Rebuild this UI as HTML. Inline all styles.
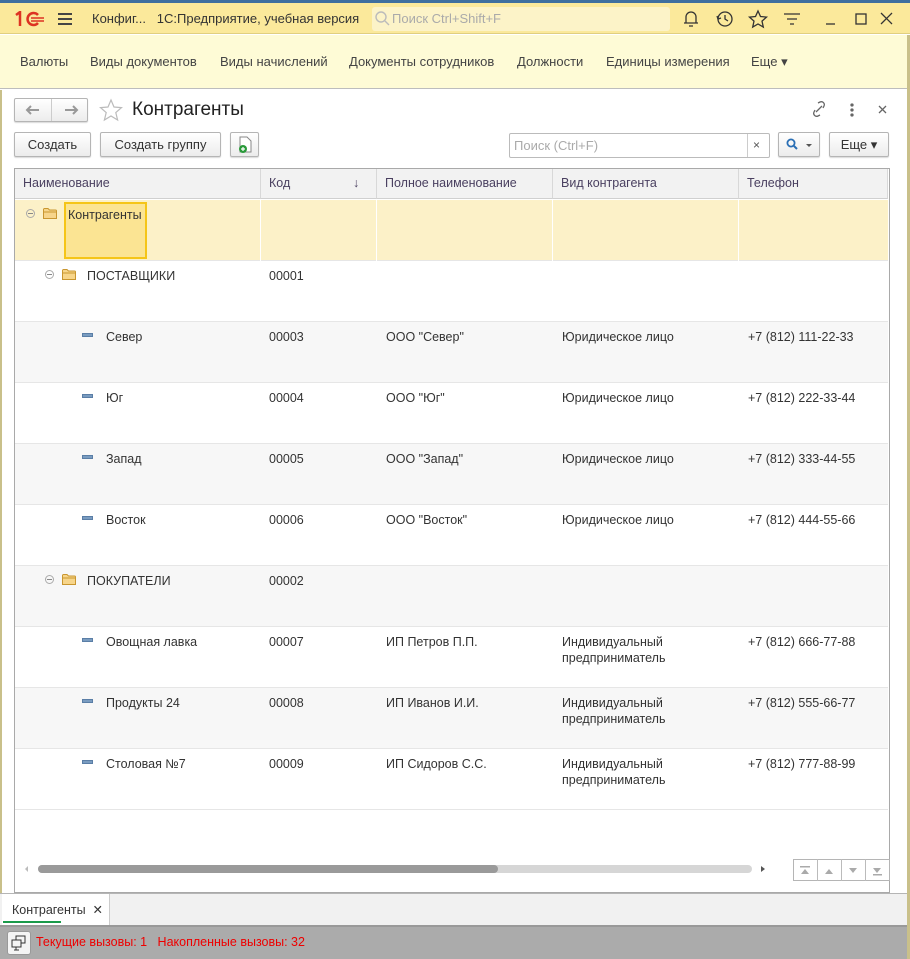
<!DOCTYPE html>
<html><head><meta charset="utf-8">
<style>
*{box-sizing:border-box;margin:0;padding:0}
body{width:910px;height:959px;position:relative;overflow:hidden;background:#fff;font-family:"Liberation Sans",Arial,sans-serif;font-size:13px;color:#333}
.a{position:absolute}
.btn{position:absolute;height:25px;border:1px solid #b5b5b5;border-radius:2px;background:linear-gradient(#fff,#ececec);box-shadow:0 1px 1px rgba(0,0,0,.15);font-size:13px;color:#333;text-align:center;line-height:23px}
.nav span{position:absolute;top:54px;font-size:13px;color:#444}
.hd{position:absolute;top:169px;height:30px;background:#f2f2f2;border-right:1px solid #d8d8d8;border-bottom:1px solid #d0d0d0;line-height:29px;padding-left:8px;color:#4a4060;font-size:12.5px}
.row{position:absolute;left:15px;width:873px;height:61px;border-bottom:1px solid #e6e6e6}
.c{position:absolute;top:7px;font-size:12.5px;color:#333;line-height:16px}
.mn{position:absolute;top:11px;width:11px;height:4px;background:#7a9cc0;border:1px solid #5a7ea6}
.fold{position:absolute;top:8px;width:14px;height:11px}
.tog{position:absolute;top:9px;width:9px;height:9px;border:1px solid #aaa;border-radius:50%}
.tog:after{content:"";position:absolute;left:1px;top:3px;width:5px;height:1px;background:#888}
</style></head><body>
<svg width="0" height="0" style="position:absolute"><defs><symbol id="fd" viewBox="0 0 14 11"><path d="M0.5 2.5V1.5a1 1 0 011-1h3.5l1.5 1.5h6a1 1 0 011 1v7.5h-13z" fill="#f7d58a" stroke="#c9962f"/><path d="M0.5 4h13" stroke="#c9962f"/></symbol></defs></svg>
<div class="a" style="left:0;top:0;width:910px;height:3px;background:#3f6f9f"></div>
<div class="a" style="left:0;top:3px;width:910px;height:31px;background:#fbe99b;border-bottom:1px solid #e0cf80"></div>
<svg class="a" style="left:14px;top:11px" width="32" height="16"><path d="M2 4l4-3v14" fill="none" stroke="#d32" stroke-width="2.5"/><path d="M24 4a6 6 0 10 0 8" fill="none" stroke="#d32" stroke-width="2.5"/><path d="M17 7h13M17 10h13" stroke="#d32" stroke-width="1.5"/></svg>
<div class="a" style="left:58px;top:13px;width:14px;height:2px;background:#444;box-shadow:0 5px 0 #444,0 10px 0 #444"></div>
<div class="a" style="left:92px;top:11px;font-size:13px;color:#333">Конфиг...&nbsp;&nbsp;&nbsp;1С:Предприятие, учебная версия</div>
<div class="a" style="left:372px;top:7px;width:298px;height:24px;background:#fcf3c8;border-radius:3px;color:#aaa;font-size:13px;line-height:24px;padding-left:20px">Поиск Ctrl+Shift+F</div>
<svg class="a" style="left:375px;top:11px" width="16" height="16" fill="none" stroke="#bbb" stroke-width="1.4"><circle cx="6" cy="6" r="5"/><path d="M10 10l4 4"/></svg>
<svg class="a" style="left:680px;top:8px" width="200" height="22" fill="none" stroke="#333" stroke-width="1.3">
<path d="M4 15h14M6 15V9a5 5 0 0110 0v6M9 18h4"/>
<circle cx="45" cy="11" r="7"/><path d="M45 7v4l3 2M37 8l1 3 3-1"/>
<path d="M78 3l2.5 5.5 6 .6-4.5 4 1.3 6L78 16l-5.3 3.1 1.3-6-4.5-4 6-.6z"/>
<path d="M104 6h16M107 11h10M110 16h4"/>
<path d="M146 16h9"/><rect x="176" y="6" width="10" height="10"/>
</svg>
<svg class="a" style="left:880px;top:12px" width="14" height="14" stroke="#333" stroke-width="1.3"><path d="M1 1l11 11M12 1L1 12"/></svg>
<div class="a" style="left:0;top:35px;width:910px;height:54px;background:#fefbd6;border-bottom:1px solid #bdbdbd"></div>
<div class="nav"><span style="left:20px">Валюты</span><span style="left:90px">Виды документов</span><span style="left:220px">Виды начислений</span><span style="left:349px">Документы сотрудников</span><span style="left:517px">Должности</span><span style="left:606px">Единицы измерения</span><span style="left:751px">Еще ▾</span></div>
<div class="a" style="left:0;top:90px;width:2px;height:803px;background:#c9c08a"></div>
<div class="a" style="left:907px;top:35px;width:3px;height:924px;background:#c9c08a"></div>
<div class="btn" style="left:14px;top:98px;width:74px;height:24px"></div>
<div class="a" style="left:51px;top:99px;width:1px;height:22px;background:#ccc"></div>
<svg class="a" style="left:24px;top:103px" width="60" height="14" stroke="#999" stroke-width="2" fill="none"><path d="M3 7h12M7 3L3 7l4 4"/><path d="M41 7h12M49 3l4 4-4 4"/></svg>
<svg class="a" style="left:98px;top:98px" width="26" height="24" fill="none" stroke="#bbb" stroke-width="1.2"><path d="M13 2l3 7 7.5.6-5.7 5 1.8 7.4L13 18l-6.6 4 1.8-7.4-5.7-5 7.5-.6z"/></svg>
<div class="a" style="left:132px;top:99px;font-size:19px;color:#222">Контрагенты</div>
<svg class="a" style="left:812px;top:100px" width="80" height="20" fill="none" stroke="#666" stroke-width="1.3"><path d="M4 12l6-6M3 10l-1 2a3 3 0 004 4l2-1M11 8l1-2a3 3 0 00-4-4l-2 1"/><circle cx="40" cy="5" r="1" fill="#666"/><circle cx="40" cy="10" r="1" fill="#666"/><circle cx="40" cy="15" r="1" fill="#666"/><path d="M67 6l7 7M74 6l-7 7"/></svg>
<div class="btn" style="left:14px;top:132px;width:77px">Создать</div>
<div class="btn" style="left:100px;top:132px;width:121px">Создать группу</div>
<div class="btn" style="left:230px;top:132px;width:29px"></div>
<svg class="a" style="left:237px;top:136px" width="16" height="18"><path d="M3 1h7l4 4v11H3z" fill="#fff" stroke="#888"/><circle cx="6" cy="13" r="4" fill="#2a9a3a"/><path d="M4 13h4M6 11v4" stroke="#fff" stroke-width="1.2"/></svg>
<div class="a" style="left:509px;top:133px;width:261px;height:25px;border:1px solid #bbb;border-radius:2px;color:#aaa;font-size:13px;line-height:23px;padding-left:4px">Поиск (Ctrl+F)</div>
<div class="a" style="left:747px;top:134px;width:1px;height:23px;background:#ccc"></div>
<div class="a" style="left:753px;top:138px;color:#555;font-size:12px">×</div>
<div class="btn" style="left:778px;top:132px;width:42px"></div>
<svg class="a" style="left:786px;top:138px" width="30" height="14"><circle cx="5" cy="5" r="3.6" fill="none" stroke="#2a6fb5" stroke-width="1.8"/><path d="M8 8l3 3" stroke="#2a6fb5" stroke-width="2"/><path d="M20 6h6l-3 3z" fill="#555"/></svg>
<div class="btn" style="left:829px;top:132px;width:60px">Еще ▾</div>
<div class="a" style="left:14px;top:168px;width:876px;height:725px;border:1px solid #a9a9a9"></div>
<div class="hd" style="left:15px;width:246px">Наименование</div>
<div class="hd" style="left:261px;width:116px">Код<span style="position:absolute;left:92px">↓</span></div>
<div class="hd" style="left:377px;width:176px">Полное наименование</div>
<div class="hd" style="left:553px;width:186px">Вид контрагента</div>
<div class="hd" style="left:739px;width:149px">Телефон</div>
<div class="row" style="top:200px;background:#fcf1c8">
 <div class="a" style="left:245px;top:0;width:1px;height:61px;background:#fff"></div>
 <div class="a" style="left:361px;top:0;width:1px;height:61px;background:#fff"></div>
 <div class="a" style="left:537px;top:0;width:1px;height:61px;background:#fff"></div>
 <div class="a" style="left:723px;top:0;width:1px;height:61px;background:#fff"></div>
 <div class="tog" style="left:11px"></div><svg class="fold" style="left:28px"><use href="#fd"/></svg>
 <div class="a" style="left:49px;top:2px;width:83px;height:57px;background:#fbe493;border:2px solid #f5c518"></div>
 <div class="c" style="left:53px">Контрагенты</div>
</div>
<div class="row" style="top:261px;background:#fff"><div class="tog" style="left:30px"></div><svg class="fold" style="left:47px"><use href="#fd"/></svg><div class="c" style="left:72px">ПОСТАВЩИКИ</div><div class="c" style="left:254px">00001</div></div>
<div class="row" style="top:322px;background:#f7f7f7"><div class="mn" style="left:67px"></div><div class="c" style="left:91px">Север</div><div class="c" style="left:254px">00003</div><div class="c" style="left:371px">ООО "Север"</div><div class="c" style="left:547px">Юридическое лицо</div><div class="c" style="left:733px">+7 (812) 111-22-33</div></div>
<div class="row" style="top:383px;background:#fff"><div class="mn" style="left:67px"></div><div class="c" style="left:91px">Юг</div><div class="c" style="left:254px">00004</div><div class="c" style="left:371px">ООО "Юг"</div><div class="c" style="left:547px">Юридическое лицо</div><div class="c" style="left:733px">+7 (812) 222-33-44</div></div>
<div class="row" style="top:444px;background:#f7f7f7"><div class="mn" style="left:67px"></div><div class="c" style="left:91px">Запад</div><div class="c" style="left:254px">00005</div><div class="c" style="left:371px">ООО "Запад"</div><div class="c" style="left:547px">Юридическое лицо</div><div class="c" style="left:733px">+7 (812) 333-44-55</div></div>
<div class="row" style="top:505px;background:#fff"><div class="mn" style="left:67px"></div><div class="c" style="left:91px">Восток</div><div class="c" style="left:254px">00006</div><div class="c" style="left:371px">ООО "Восток"</div><div class="c" style="left:547px">Юридическое лицо</div><div class="c" style="left:733px">+7 (812) 444-55-66</div></div>
<div class="row" style="top:566px;background:#f7f7f7"><div class="tog" style="left:30px"></div><svg class="fold" style="left:47px"><use href="#fd"/></svg><div class="c" style="left:72px">ПОКУПАТЕЛИ</div><div class="c" style="left:254px">00002</div></div>
<div class="row" style="top:627px;background:#fff"><div class="mn" style="left:67px"></div><div class="c" style="left:91px">Овощная лавка</div><div class="c" style="left:254px">00007</div><div class="c" style="left:371px">ИП Петров П.П.</div><div class="c" style="left:547px">Индивидуальный<br>предприниматель</div><div class="c" style="left:733px">+7 (812) 666-77-88</div></div>
<div class="row" style="top:688px;background:#f7f7f7"><div class="mn" style="left:67px"></div><div class="c" style="left:91px">Продукты 24</div><div class="c" style="left:254px">00008</div><div class="c" style="left:371px">ИП Иванов И.И.</div><div class="c" style="left:547px">Индивидуальный<br>предприниматель</div><div class="c" style="left:733px">+7 (812) 555-66-77</div></div>
<div class="row" style="top:749px;background:#fff"><div class="mn" style="left:67px"></div><div class="c" style="left:91px">Столовая №7</div><div class="c" style="left:254px">00009</div><div class="c" style="left:371px">ИП Сидоров С.С.</div><div class="c" style="left:547px">Индивидуальный<br>предприниматель</div><div class="c" style="left:733px">+7 (812) 777-88-99</div></div>
<div class="a" style="left:22px;top:866px;width:0;height:0;border:3px solid transparent;border-right:3px solid #bbb"></div>
<div class="a" style="left:38px;top:865px;width:714px;height:8px;background:#d6d6d6;border-radius:4px"></div>
<div class="a" style="left:38px;top:865px;width:460px;height:8px;background:#9a9a9a;border-radius:4px"></div>
<div class="a" style="left:761px;top:866px;width:0;height:0;border:3px solid transparent;border-left:4px solid #555"></div>
<div class="a" style="left:793px;top:859px;width:97px;height:22px;border:1px solid #b5b5b5;background:#fff"></div>
<div class="a" style="left:817px;top:859px;width:1px;height:22px;background:#bbb;box-shadow:24px 0 #bbb,48px 0 #bbb"></div>
<svg class="a" style="left:793px;top:859px" width="97" height="22" fill="#aaa"><path d="M8 15l4-5 4 5z"/><rect x="7" y="7" width="10" height="1.5"/><path d="M32 15l4-5 4 5z"/><path d="M56 9l4 5 4-5z"/><path d="M80 9l4 5 4-5z"/><rect x="80" y="15" width="9" height="1.5"/></svg>
<div class="a" style="left:0;top:893px;width:907px;height:1px;background:#b5b5b5"></div>
<div class="a" style="left:0;top:894px;width:907px;height:31px;background:#f1f1f1"></div>
<div class="a" style="left:2px;top:894px;width:108px;height:31px;background:#fff;border-right:1px solid #ccc"></div>
<div class="a" style="left:12px;top:902px;font-size:12.5px;color:#333">Контрагенты&nbsp; ✕</div>
<div class="a" style="left:3px;top:921px;width:58px;height:2px;background:#1a9a4a"></div>
<div class="a" style="left:0;top:925px;width:907px;height:2px;background:#999"></div>
<div class="a" style="left:0;top:927px;width:907px;height:32px;background:#ababab"></div>
<div class="a" style="left:7px;top:931px;width:24px;height:24px;background:#f4f4f4;border-radius:3px;border:1px solid #999"></div>
<svg class="a" style="left:10px;top:934px" width="18" height="18" fill="none" stroke="#333" stroke-width="1"><rect x="6" y="2" width="9" height="7"/><rect x="2" y="6" width="9" height="7" fill="#f4f4f4"/><path d="M6 13v3M4 16h5"/></svg>
<div class="a" style="left:36px;top:935px;font-size:12.5px;color:#e00">Текущие вызовы: 1&nbsp;&nbsp;&nbsp;Накопленные вызовы: 32</div>
</body></html>
